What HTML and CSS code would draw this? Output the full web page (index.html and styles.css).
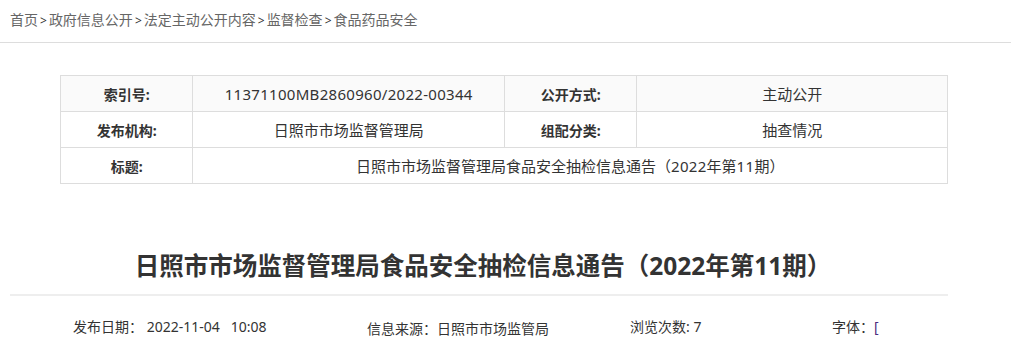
FILE: index.html
```html
<!DOCTYPE html>
<html lang="zh-CN">
<head>
    <meta charset="UTF-8">
    <meta name="viewport" content="width=device-width, initial-scale=1.0">
    <title>日照市市场监督管理局食品安全抽检信息通告（2022年第11期）</title>
    <link rel="stylesheet" href="styles.css">
</head>
<body>
    <div class="crumbs">
        <a href="#">首页</a><span class="sep">&gt;</span><a href="#">政府信息公开</a><span class="sep">&gt;</span><a href="#">法定主动公开内容</a><span class="sep">&gt;</span><a href="#">监督检查</a><span class="sep">&gt;</span><a href="#">食品药品安全</a>
    </div>

    <div class="content">
        <table class="info">
            <tr class="first">
                <th>索引号:</th>
                <td class="num">11371100MB2860960/2022-00344</td>
                <th>公开方式:</th>
                <td>主动公开</td>
            </tr>
            <tr>
                <th>发布机构:</th>
                <td>日照市市场监督管理局</td>
                <th>组配分类:</th>
                <td>抽查情况</td>
            </tr>
            <tr>
                <th>标题:</th>
                <td colspan="3">日照市市场监督管理局食品安全抽检信息通告（<span class="num">2022</span>年第<span class="num">11</span>期）</td>
            </tr>
        </table>

        <h1 class="title">日照市市场监督管理局食品安全抽检信息通告（2022年第11期）</h1>

        <div class="meta">
            <span class="date">发布日期：&nbsp;2022-11-04&nbsp;&nbsp;&nbsp;10:08</span>
            <span class="source">信息来源：日照市市场监管局</span>
            <span class="views">浏览次数: 7</span>
            <span class="size">字体：<a href="#">[</a></span>
        </div>
    </div>
</body>
</html>
```

FILE: styles.css
```css
body {
    margin: 0;
    font-family: "Noto Sans", "Noto Sans CJK SC", sans-serif;
    color: #333;
    background: #fff;
}

a {
    text-decoration: none;
}

/* breadcrumb */
.crumbs {
    height: 42px;
    line-height: 40px;
    padding-left: 10px;
    font-size: 14px;
    border-bottom: 1px solid #ddd;
}

.crumbs a {
    color: #666;
}

.crumbs .sep {
    color: #333;
    padding: 0 2px;
    font-size: 12px;
}

.content {
    width: 938px;
    margin-left: 10px;
}

/* info table */
.info {
    width: 888px;
    margin: 32px 0 0 50px;
    border-collapse: collapse;
    font-size: 15px;
}

.info th,
.info td {
    height: 35px;
    padding: 0;
    border: 1px solid #ddd;
    text-align: center;
    color: #333;
}

.info th {
    width: 132px;
    font-size: 14px;
    font-weight: bold;
}

.info td {
    width: 311px;
}

.info tr.first th,
.info tr.first td {
    background: #fafafa;
}

.num {
    letter-spacing: 0.3px;
}

/* article head */
.title {
    margin: 54px 0 0;
    padding-left: 8px;
    height: 56px;
    line-height: 56px;
    font-size: 24.5px;
    font-weight: bold;
    text-align: center;
    color: #333;
    border-bottom: 2px solid #eee;
}

.meta {
    display: flex;
    align-items: baseline;
    padding-top: 20px;
    font-size: 14px;
}

.meta .date {
    margin-left: 63px;
    width: 294px;
}

.meta .source {
    width: 263px;
    position: relative;
    top: 2px;
}

.meta .views {
    width: 202px;
}

.meta .size a {
    color: #4b2c7f;
}
```
